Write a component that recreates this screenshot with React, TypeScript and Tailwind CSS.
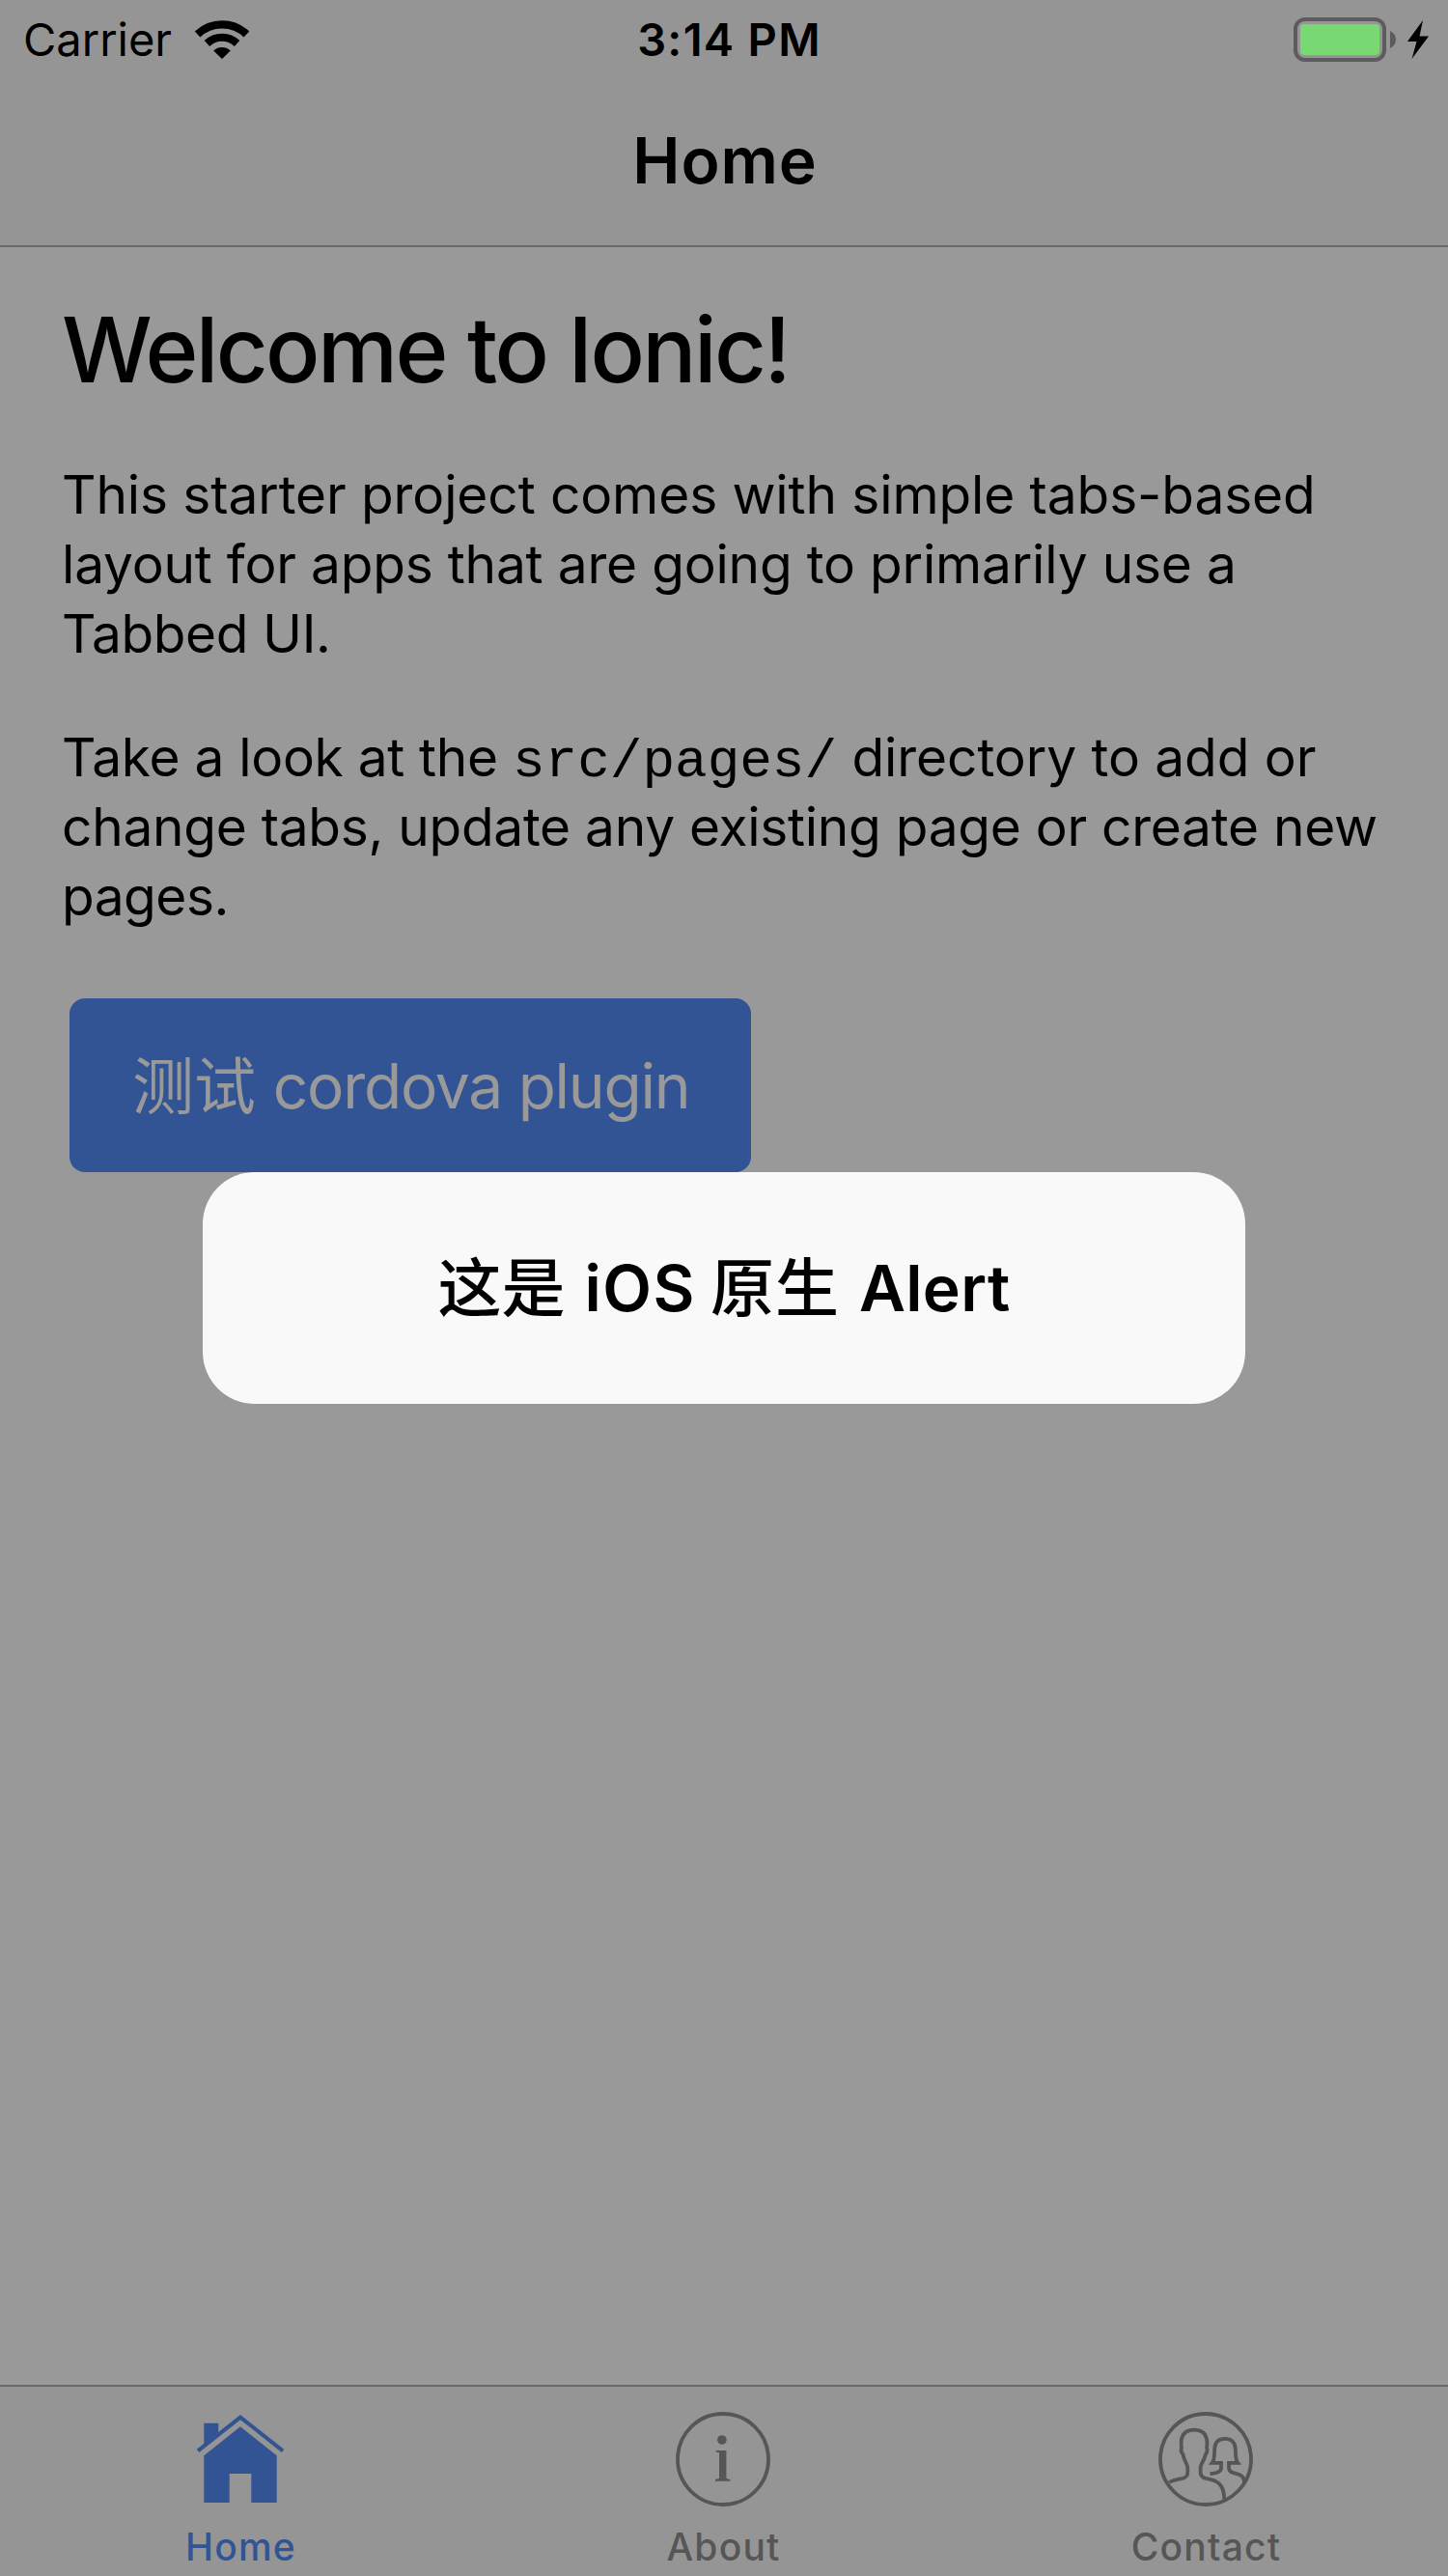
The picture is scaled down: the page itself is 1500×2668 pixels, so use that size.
import React from 'react';

function WifiIcon() {
  return (
    <svg className="h-[40px] w-[56px]" viewBox="0 0 56 40" fill="none">
      <path d="M2.6 14.4 A37 37 0 0 1 53.4 14.4" stroke="#000" strokeWidth="8.2" />
      <path d="M12.4 24 A22.5 22.5 0 0 1 43.6 24" stroke="#000" strokeWidth="8" />
      <path d="M19.2 31.4 A13 13 0 0 1 36.8 31.4 L28 40 Z" fill="#000" />
    </svg>
  );
}

function BatteryIcon() {
  return (
    <div className="flex items-center">
      <div className="h-[46px] w-[96px] rounded-[12px] border-[4px] border-[#5d5b5d] p-[3px]">
        <div className="h-full w-full rounded-[4px] bg-[#78d872]" />
      </div>
      <svg className="ml-[4px] h-[18px] w-[6px]" viewBox="0 0 6 18">
        <path d="M0 0 C3 1.5 6 4.5 6 9 C6 13.5 3 16.5 0 18 Z" fill="#5d5b5d" />
      </svg>
      <svg className="ml-[12px] h-[40px] w-[22px]" viewBox="0 0 22 40">
        <path d="M16 0 L0 22 H9.5 L4.5 40 L22 16.5 H12.5 Z" fill="#000" />
      </svg>
    </div>
  );
}

function HomeIcon() {
  return (
    <svg className="h-[98px] w-[98px]" viewBox="0 0 98 98" fill="#325495">
      <path d="M11.3 11.7 H26.3 V21.6 L11.3 33.6 Z" />
      <path d="M5 40.4 L49 5.6 L93 40.4" fill="none" stroke="#325495" strokeWidth="4" />
      <path d="M49 15.3 L86.7 45.3 V94 H60.3 V64 H37.7 V94 H11.3 V45.3 Z" />
    </svg>
  );
}

function AboutIcon() {
  return (
    <svg className="h-[98px] w-[98px]" viewBox="0 0 98 98" fill="#565656">
      <circle cx="49" cy="49" r="47" fill="none" stroke="#565656" strokeWidth="3.8" />
      <circle cx="47.9" cy="29" r="4.8" />
      <path d="M41.7 40 H52.4 V69 L56.3 70 V71.7 H41 V70 L45 69 V42.2 L41.7 41.4 Z" />
    </svg>
  );
}

function ContactIcon() {
  return (
    <svg className="h-[98px] w-[98px]" viewBox="0 0 98 98" fill="none" stroke="#565656" strokeWidth="3.8">
      <circle cx="49" cy="49" r="47" />
      <path d="M11.2 73 C15 70.5 19 70.3 23 69.4 C28 68.5 30.3 67 30.3 63 V58 C30 53 26.3 51 25.5 44 C23.2 41.5 23.3 39 24 37 C23.4 34 23.5 31 24 28 C25.5 21.5 30 18.6 37 18.6 C44 18.6 48.5 21.5 50 28 C50.6 31 50.6 34 50 37 C50.8 39 50.6 42 48.7 44.5 C47.6 51 43.8 53 43.6 58 V62.5 C43.6 67 46 68.4 50 69.2 C57 70.6 61 71.4 64.4 76 C67.4 80 68.2 84.5 68.3 91.5" />
      <path d="M53.5 64.2 C60.5 63.6 65 61.8 65 58.6 V52.8 H55.8 C58.5 49.5 57.8 43 58.3 37.5 C58.8 31 62 27.8 69 27.8 C76 27.8 79.2 31 79.7 37.5 C80.2 43 79.5 49.5 82.2 52.8 H73 V58.6 C73 64.4 81 62.4 86 66.2 C88.3 68 88.9 70 89 73" />
    </svg>
  );
}

function Tab({ icon, label, color }: { icon: React.ReactNode; label: string; color: string }) {
  return (
    <div className={`flex flex-col items-center pt-[25px] pr-[2px] ${color}`}>
      {icon}
      <span className="mt-[17px] pl-[1px] text-[39px] leading-[50px] font-medium tracking-[1.2px]">{label}</span>
    </div>
  );
}

export default function App() {
  return (
    <div className="relative flex h-[2668px] w-[1500px] flex-col overflow-hidden bg-[#999999] font-[Inter,'Noto_Sans_CJK_SC',sans-serif] text-black">
      <header className="h-[256px] border-b-2 border-[#6a6a6a] bg-[#959595]">
        <div className="grid h-[82px] grid-cols-3 items-center">
          <div className="flex items-center gap-[24px] pl-[24px] text-[47px] leading-[82px]">
            <span>Carrier</span>
            <WifiIcon />
          </div>
          <div className="pl-[11px] text-center text-[47px] leading-[82px] font-semibold tracking-[1.3px]">3:14 PM</div>
          <div className="flex justify-end pr-[20px]">
            <BatteryIcon />
          </div>
        </div>
        <h1 className="pl-[2px] text-center text-[66px] leading-[168px] font-semibold tracking-[0.9px]">Home</h1>
      </header>

      <main className="flex-1 px-[64px] pt-[50px]">
        <h2 className="text-[93.5px] leading-[112px] font-medium tracking-[-2.6px]">Welcome to Ionic!</h2>
        <p className="mt-[58px] text-[55px] leading-[72px] whitespace-nowrap">
          <span className="block tracking-[-0.1px]">This starter project comes with simple tabs-based</span>
          <span className="block tracking-[-0.19px]">layout for apps that are going to primarily use a</span>
          <span className="block tracking-[-0.4px]">Tabbed UI.</span>
        </p>
        <p className="mt-[56px] text-[55px] leading-[72px] whitespace-nowrap">
          <span className="block">
            <span className="tracking-[-0.29px]">Take a look at the </span>
            <code className="font-['Liberation_Mono',monospace] text-[56px] leading-[0]">src/pages/</code>
            <span className="tracking-[-0.06px]"> directory to add or</span>
          </span>
          <span className="block tracking-[-0.27px]">change tabs, update any existing page or create new</span>
          <span className="block tracking-[-0.5px]">pages.</span>
        </p>
        <button className="mt-[70px] ml-[8px] block h-[180px] w-[706px] rounded-[16px] bg-[#325495] pt-[2px] pl-[65px] text-left text-[64px] leading-[178px] whitespace-nowrap text-[#999999]">
          <span className="font-normal">测试</span>
          <span className="ml-[1px] tracking-[-1.25px]"> cordova plugin</span>
        </button>
      </main>

      <nav className="grid h-[198px] grid-cols-3 border-t-2 border-[#6a6a6a] bg-[#959595] pt-px">
        <Tab icon={<HomeIcon />} label="Home" color="text-[#325495]" />
        <Tab icon={<AboutIcon />} label="About" color="text-[#565656]" />
        <Tab icon={<ContactIcon />} label="Contact" color="text-[#565656]" />
      </nav>

      <div className="absolute inset-0 flex items-center justify-center">
        <div className="flex h-[240px] w-[1080px] items-center justify-center rounded-[54px] bg-[#f9f9f9] text-[66px] leading-[80px]">
          <span className="font-medium">这是</span>
          <span className="ml-[20px] font-semibold tracking-[1.5px]">iOS</span>
          <span className="ml-[15px] font-medium tracking-[1px]">原生</span>
          <span className="ml-[20px] font-semibold tracking-[0.32px]">Alert</span>
        </div>
      </div>
    </div>
  );
}
